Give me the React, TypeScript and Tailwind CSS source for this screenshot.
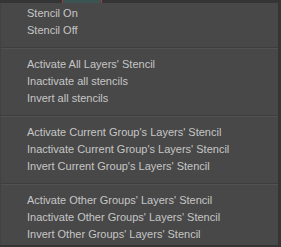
const groups = [
  ['Stencil On', 'Stencil Off'],
  ['Activate All Layers\' Stencil', 'Inactivate all stencils', 'Invert all stencils'],
  ['Activate Current Group\'s Layers\' Stencil', 'Inactivate Current Group\'s Layers\' Stencil', 'Invert Current Group\'s Layers\' Stencil'],
  ['Activate Other Groups\' Layers\' Stencil', 'Inactivate Other Groups\' Layers\' Stencil', 'Invert Other Groups\' Layers\' Stencil'],
];

export default function App() {
  return (
    <div className="w-[281px] h-[247px] bg-[#353535] flex flex-col overflow-hidden" style={{ fontFamily: '"Liberation Sans", Arial, sans-serif' }}>
      {/* strip of the window behind the menu */}
      <div className="h-[3px] flex shrink-0">
        <div className="w-[62px]" />
        <div className="w-[40px] bg-[#3d5552] border-x border-[#a33a3a]" />
      </div>
      <div className="flex flex-1 min-h-0">
        <div className="w-[278px] h-[242px] bg-[#484848] border-l border-[#424242] py-[2px]">
          {groups.map((items, gi) => (
            <div key={gi}>
              {gi > 0 && (
                <div className="h-[17px] flex flex-col justify-center">
                  <div className="h-px bg-[#3e3e3e]" />
                  <div className="h-px bg-[#525252]" />
                </div>
              )}
              {items.map(label => (
                <div key={label} className="h-[17px] flex items-center pl-[26px] text-[11px] text-[#c6c6c6] whitespace-nowrap">
                  {label}
                </div>
              ))}
            </div>
          ))}
        </div>
      </div>
    </div>
  );
}
